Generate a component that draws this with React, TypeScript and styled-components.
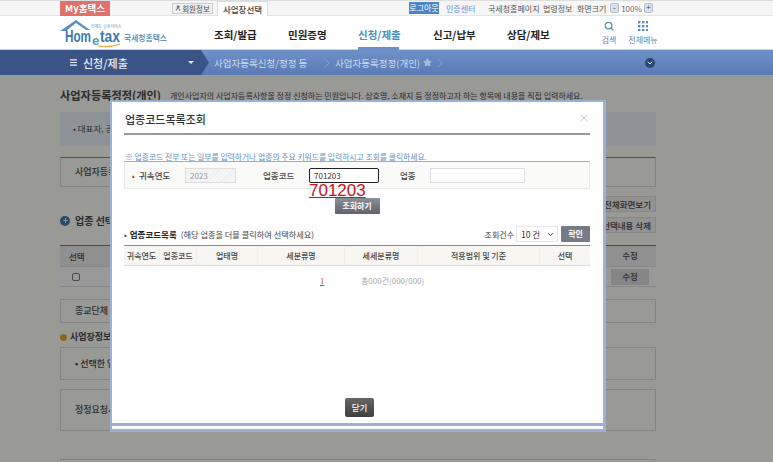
import styled, { createGlobalStyle } from "styled-components";
import { Search, X, Menu, Star, ChevronDown, ChevronRight, User, Plus } from "lucide-react";

const GlobalStyle = createGlobalStyle`
  html, body {
    margin: 0;
    padding: 0;
    width: 773px;
    height: 462px;
    overflow: hidden;
    background: #fff;
    font-family: "Noto Sans CJK KR", "Noto Sans", sans-serif;
  }
  * { box-sizing: border-box; }
`;

const Page = styled.div`
  position: relative;
  width: 773px;
  height: 462px;
  overflow: hidden;
`;

/* top utility bar */
const TopBar = styled.div`
  height: 16px;
  background: #f6f6f6;
  border-top: 1px solid #ddd;
  border-bottom: 1px solid #e4e4e4;
  padding-left: 60px;
  display: flex;
  align-items: center;
  font-size: 8.5px;
  color: #444;
`;

const MyTab = styled.div`
  width: 50px;
  height: 15px;
  background: #e0706a;
  color: #fff;
  font-size: 9.5px;
  font-weight: 700;
  text-align: center;
  line-height: 15px;
`;

const MemberBtn = styled.div`
  margin-left: 62px;
  width: 41px;
  height: 11px;
  border: 1px solid #ccc;
  background: #f2f2f2;
  font-size: 7.5px;
  line-height: 9px;
  display: flex;
  align-items: center;
  justify-content: center;
  gap: 1px;
`;

const PlaceTab = styled.div`
  margin-left: 4px;
  width: 51px;
  height: 15px;
  background: #fff;
  border: 1px solid #ddd;
  border-bottom: none;
  font-size: 8.5px;
  font-weight: 500;
  text-align: center;
  line-height: 14px;
`;

const LogoutBtn = styled.div`
  margin-left: 141px;
  width: 30px;
  height: 12px;
  background: #4a86c5;
  color: #fff;
  line-height: 12px;
  text-align: center;
  font-size: 8px;
`;

const TopLink = styled.span<{ $w: number; $blue?: boolean; $gap: number }>`
  width: ${(p) => p.$w}px;
  margin-left: ${(p) => p.$gap}px;
  color: ${(p) => (p.$blue ? "#5b8fd0" : "#555")};
  font-size: 8px;
  white-space: nowrap;
`;

const Zoomer = styled.div`
  margin-left: 5px;
  width: 43px;
  height: 11px;
  display: flex;
  align-items: center;
  justify-content: space-between;
  background: #fff;
  font-size: 8px;
  color: #666;
`;

const ZoomKey = styled.span`
  width: 9px;
  height: 10px;
  background: #d8e0ec;
  border: 1px solid #b5bfce;
  border-radius: 2px;
  font-size: 7px;
  line-height: 7px;
  text-align: center;
  color: #333;
`;

/* main menu */
const Header = styled.div`
  height: 34px;
  background: #fff;
  padding-left: 60px;
  display: flex;
  align-items: center;
  border-bottom: 1px solid #c9d3e2;
`;

const LogoArt = styled.svg`
  width: 113px;
  height: 32px;
  flex: none;
`;

const MainItem = styled.div<{ $w: number; $gap: number; $on?: boolean }>`
  width: ${(p) => p.$w}px;
  margin-left: ${(p) => p.$gap}px;
  height: 34px;
  line-height: 38px;
  font-size: 10.5px;
  font-weight: 700;
  white-space: nowrap;
  color: ${(p) => (p.$on ? "#4a8fc4" : "#222")};
  border-bottom: ${(p) => (p.$on ? "3px solid #6b8fc4" : "none")};
`;

const HeadIcon = styled.div<{ $gap: number; $w: number }>`
  width: ${(p) => p.$w}px;
  margin-left: ${(p) => p.$gap}px;
  display: flex;
  flex-direction: column;
  align-items: center;
  font-size: 8px;
  color: #5b8ab8;
  line-height: 11px;
  gap: 3px;
  white-space: nowrap;
`;

const Dots = styled.svg`
  width: 10px;
  height: 10px;
`;

/* breadcrumb band */
const Band = styled.div`
  height: 25px;
  display: flex;
  align-items: center;
  background: linear-gradient(#6f90c8, #5a7ab3);
  color: #cfdcf0;
  font-size: 9.5px;
`;

const BandDark = styled.div`
  width: 209px;
  height: 25px;
  padding-left: 69px;
  flex: none;
  display: flex;
  align-items: center;
  color: #e8eef8;
  background: #3a5488;
  clip-path: polygon(0 0, 201px 0, 209px 50%, 201px 100%, 0 100%);
  font-size: 11px;
  font-weight: 500;
`;

const BandTitle = styled.span`
  margin-left: 5px;
  width: 105px;
`;

const Caret = styled.span`
  width: 0;
  height: 0;
  border: 3px solid transparent;
  border-top: 3px solid #e8eef8;
  border-bottom: none;
`;

const Crumb = styled.span<{ $w: number; $gap: number }>`
  width: ${(p) => p.$w}px;
  margin-left: ${(p) => p.$gap}px;
  white-space: nowrap;
`;

const CrumbTip = styled.span<{ $gap: number }>`
  display: flex;
  margin-left: ${(p) => p.$gap}px;
  color: #8fa8d4;
`;

const BandKnob = styled.div`
  margin-left: 197px;
  width: 10px;
  height: 10px;
  border-radius: 50%;
  background: #2f4670;
  color: #dfe7f3;
  display: flex;
  align-items: center;
  justify-content: center;
`;

/* page behind the dialog */
const Content = styled.div`
  position: relative;
  width: 773px;
  height: 387px;
  padding: 12px 117px 0 60px;
  background: #fffffb;
  color: #4a4a4a;
`;

const Dim = styled.div`
  position: absolute;
  inset: 0;
  background: rgba(0, 0, 0, 0.4);
`;

const TitleRow = styled.div`
  display: flex;
  align-items: center;
  height: 16px;
`;

const PageTitle = styled.div`
  width: 110px;
  font-size: 11.2px;
  font-weight: 700;
  white-space: nowrap;
`;

const PageDesc = styled.div`
  font-size: 8px;
  white-space: nowrap;
`;

const Notice = styled.div`
  margin-top: 9px;
  height: 34px;
  padding-left: 13px;
  background: #ecf6fa;
  font-size: 8.5px;
  line-height: 33px;
`;

const BackBox = styled.div<{ $h: number; $mt: number; $strong?: boolean }>`
  height: ${(p) => p.$h}px;
  margin-top: ${(p) => p.$mt}px;
  padding-left: 14px;
  border: 1px solid #ddd;
  border-top: 1px solid ${(p) => (p.$strong ? "#888" : "#ddd")};
  font-size: 9px;
  font-weight: 500;
  line-height: ${(p) => p.$h - 2}px;
  white-space: nowrap;
`;

const ToolRow = styled.div`
  position: relative;
  height: 58px;
  display: flex;
  flex-direction: column;
  align-items: flex-end;
  gap: 5px;
  padding-top: 9px;
`;

const GhostBtn = styled.div<{ $w: number }>`
  width: ${(p) => p.$w}px;
  height: 16px;
  padding-right: 4px;
  text-align: right;
  font-size: 8.5px;
  font-weight: 500;
  line-height: 15px;
  background: #f3f3f3;
  border: 1px solid #e2e2e2;
`;

const SectionHead = styled.div`
  position: absolute;
  left: 0;
  top: 26px;
  display: flex;
  align-items: center;
  gap: 5px;
  font-size: 10px;
  font-weight: 700;
`;

const Bullet = styled.span<{ $c: string; $s: number }>`
  width: ${(p) => p.$s}px;
  height: ${(p) => p.$s}px;
  border-radius: 50%;
  background: ${(p) => p.$c};
  color: #fff;
  display: flex;
  align-items: center;
  justify-content: center;
`;

const BackTable = styled.div`
  border-top: 1px solid #777;
  font-size: 8.5px;
  font-weight: 500;
`;

const BackRow = styled.div<{ $head?: boolean }>`
  height: ${(p) => (p.$head ? 21 : 20)}px;
  display: flex;
  align-items: center;
  justify-content: space-between;
  padding: 0 7px 0 9px;
  background: ${(p) => (p.$head ? "#f1f1f1" : "#fff")};
  border-bottom: 1px solid #e3e3e3;
`;

const BackCheck = styled.span`
  margin-left: 3px;
  width: 8px;
  height: 8px;
  border: 1px solid #777;
  border-radius: 2px;
`;

const BackEdit = styled.span<{ $fill?: boolean }>`
  width: 38px;
  height: 16px;
  line-height: 15px;
  text-align: center;
  border-radius: 1px;
  background: ${(p) => (p.$fill ? "#dedede" : "transparent")};
`;

const SubHead = styled.div`
  margin-top: 9px;
  height: 10px;
  display: flex;
  align-items: center;
  gap: 3px;
  font-size: 9px;
  font-weight: 700;
  line-height: 10px;
`;

const SideBox = styled.div`
  position: absolute;
  left: 546px;
  top: 317px;
  width: 46px;
  height: 36px;
  border: 1px solid #ddd;
`;

const FootBox = styled.div`
  position: absolute;
  left: 60px;
  top: 384px;
  width: 596px;
  height: 10px;
  border: 1px solid #ddd;
  border-bottom: none;
`;

/* dialog */
const Dialog = styled.div`
  position: absolute;
  left: 110px;
  top: 100px;
  width: 496px;
  height: 332px;
  border: solid #9cafd4;
  border-width: 2px 3px 3px 2px;
  background: #9cafd4;
  display: flex;
  flex-direction: column;
`;

const DialogBody = styled.div`
  position: relative;
  height: 321px;
  background: #fff;
  padding: 0 13px 0 12px;
`;

const DialogEdge = styled.div`
  margin-top: 3px;
  height: 3px;
  background: #fff;
`;

const DialogHead = styled.div`
  height: 33px;
  display: flex;
  align-items: flex-end;
  justify-content: space-between;
  padding: 0 0 6px 1px;
  border-bottom: 2px solid #999;
  font-size: 11px;
  font-weight: 500;
  color: #333;
`;

const CloseMark = styled.span`
  color: #999;
  display: flex;
  margin-bottom: 3px;
`;

const HintLink = styled.div`
  margin-top: 16px;
  font-size: 7.8px;
  line-height: 11px;
  color: #5f93bf;
  text-decoration: underline;
  white-space: nowrap;
  padding-left: 1px;
`;

const FormBox = styled.div`
  position: relative;
  height: 28px;
  margin-top: -1px;
  display: flex;
  align-items: center;
  background: #fafaf8;
  border: 1px solid #e8e8e6;
  border-top: 1px solid #aaa;
  font-size: 8.5px;
  color: #444;
`;

const Req = styled.span`
  margin-left: 7px;
  width: 7px;
  color: #c22;
  font-size: 8px;
`;

const FieldLabel = styled.span<{ $w: number; $ml?: number }>`
  width: ${(p) => p.$w}px;
  margin-left: ${(p) => p.$ml ?? 0}px;
  white-space: nowrap;
  font-weight: 500;
`;

const Field = styled.div<{ $w: number; $mode?: "locked" | "active" }>`
  width: ${(p) => p.$w}px;
  height: 15px;
  padding-left: 4px;
  font-size: 8px;
  line-height: 13px;
  color: ${(p) => (p.$mode === "locked" ? "#999" : "#333")};
  background: ${(p) =>
    p.$mode === "locked"
      ? "repeating-linear-gradient(135deg, #eee 0 1px, #f6f6f6 1px 3px)"
      : "#fff"};
  border: 1px solid ${(p) => (p.$mode === "active" ? "#222" : "#ddd")};
  border-radius: ${(p) => (p.$mode === "active" ? 2 : 0)}px;
`;

const RedNote = styled.div`
  position: absolute;
  left: 184px;
  top: 20px;
  font-family: "Liberation Sans", sans-serif;
  font-size: 17px;
  line-height: 18px;
  color: #c8141c;
  text-decoration: underline;
`;

const CenterRow = styled.div<{ $mt: number }>`
  display: flex;
  justify-content: center;
  margin-top: ${(p) => p.$mt}px;
`;

const SearchBtn = styled.div`
  width: 45px;
  height: 16px;
  border-radius: 1px;
  background: linear-gradient(#8b8f97, #5f636b);
  color: #fff;
  font-size: 8px;
  font-weight: 700;
  line-height: 15px;
  text-align: center;
`;

const ListHead = styled.div`
  margin-top: 12px;
  height: 16px;
  display: flex;
  align-items: center;
  font-size: 8.2px;
  color: #444;
  white-space: nowrap;
`;

const ListTitle = styled.strong`
  margin: 0 4px 0 3px;
  font-size: 8.5px;
  color: #222;
`;

const CountLabel = styled.span`
  margin-left: auto;
  margin-right: 2px;
  font-size: 8px;
`;

const PageSize = styled.div`
  width: 42px;
  height: 16px;
  padding: 0 2px 0 4px;
  display: flex;
  align-items: center;
  justify-content: space-between;
  font-size: 8.5px;
  background: #fff;
  border: 1px solid #e8e8e8;
  color: #333;
`;

const ConfirmBtn = styled.div`
  margin-left: 3px;
  width: 29px;
  height: 16px;
  border-radius: 1px;
  background: #777b85;
  color: #fff;
  font-size: 8px;
  font-weight: 700;
  line-height: 15px;
  text-align: center;
`;

const GridHead = styled.div`
  margin-top: 3px;
  height: 21px;
  display: grid;
  grid-template-columns: 36px 37px 61px 87px 73px 122px 50px;
  background: #f7f6f3;
  border-top: 1px solid #888;
  border-bottom: 1px solid #ddd;
`;

const GridCell = styled.div`
  font-size: 8px;
  font-weight: 500;
  line-height: 19px;
  text-align: center;
  color: #444;
  white-space: nowrap;
  border-right: 1px solid #f0efec;
  &:last-child {
    border-right: none;
  }
`;

const Pager = styled.div`
  margin-top: 9px;
  height: 12px;
  display: flex;
  font-size: 8.5px;
  line-height: 12px;
`;

const PagerNum = styled.span`
  margin-left: 196px;
  width: 41px;
  font-family: "Liberation Serif", serif;
  color: #c0403a;
  text-decoration: underline;
`;

const PagerTotal = styled.span`
  color: #aaa;
  font-size: 8px;
  white-space: nowrap;
`;

const CloseBtn = styled.div`
  position: absolute;
  left: 233px;
  bottom: 6px;
  width: 29px;
  height: 19px;
  border-radius: 2px;
  background: linear-gradient(#666, #3f3f3f);
  color: #fff;
  font-size: 8.5px;
  font-weight: 500;
  line-height: 18px;
  text-align: center;
`;

const columns = [
  "귀속연도",
  "업종코드",
  "업태명",
  "세분류명",
  "세세분류명",
  "적용범위 및 기준",
  "선택",
];

function Logo() {
  return (
    <LogoArt viewBox="0 0 113 32">
      <path d="M0 14 L16 3 L30 13 L26 13 L16 6 L6 14 Z" fill="#5a8fc0" />
      <text
        x="5"
        y="25"
        fontFamily="Liberation Sans"
        fontWeight="700"
        fontSize="16"
        fill="#3d78b0"
        textLength="26"
        lengthAdjust="spacingAndGlyphs"
      >
        Hom
      </text>
      <text
        x="32"
        y="28"
        fontFamily="Liberation Sans"
        fontWeight="700"
        fontSize="13"
        fill="#5aa0a8"
        textLength="7.5"
        lengthAdjust="spacingAndGlyphs"
      >
        e
      </text>
      <text
        x="40"
        y="25"
        fontFamily="Liberation Sans"
        fontWeight="700"
        fontSize="16"
        fill="#3d78b0"
        textLength="20"
        lengthAdjust="spacingAndGlyphs"
      >
        tax
      </text>
      <path d="M38 29 Q50 31 60 27" stroke="#e2a63b" strokeWidth="1.2" fill="none" />
      <text x="64" y="24" fontFamily="Noto Sans CJK KR" fontWeight="500" fontSize="7.8" fill="#4a86b8">
        국세청홈택스
      </text>
      <text x="31" y="11" fontFamily="Noto Sans CJK KR" fontSize="4" fill="#6b93b8">
        언제든 실생서비스
      </text>
    </LogoArt>
  );
}

function GridDots() {
  const spots = [0, 4, 8];
  return (
    <Dots viewBox="0 0 10 10">
      {spots.map((y) =>
        spots.map((x) => (
          <rect key={`${x}-${y}`} x={x} y={y} width="2.4" height="2.4" fill="#5b8ab8" />
        ))
      )}
    </Dots>
  );
}

export default function App() {
  return (
    <Page>
      <GlobalStyle />
      <TopBar>
        <MyTab>My홈택스</MyTab>
        <MemberBtn>
          <User size={6} strokeWidth={3} />
          회원정보
        </MemberBtn>
        <PlaceTab>사업장선택</PlaceTab>
        <LogoutBtn>로그아웃</LogoutBtn>
        <TopLink $w={30} $gap={7} $blue>
          인증센터
        </TopLink>
        <TopLink $w={48} $gap={12}>
          국세청홈페이지
        </TopLink>
        <TopLink $w={27} $gap={7}>
          법령정보
        </TopLink>
        <TopLink $w={28} $gap={7}>
          화면크기
        </TopLink>
        <Zoomer>
          <ZoomKey>-</ZoomKey>
          100%
          <ZoomKey>+</ZoomKey>
        </Zoomer>
      </TopBar>

      <Header>
        <Logo />
        <MainItem $w={41} $gap={41}>
          조회/발급
        </MainItem>
        <MainItem $w={38} $gap={33}>
          민원증명
        </MainItem>
        <MainItem $w={41} $gap={32} $on>
          신청/제출
        </MainItem>
        <MainItem $w={41} $gap={34}>
          신고/납부
        </MainItem>
        <MainItem $w={41} $gap={33}>
          상담/제보
        </MainItem>
        <HeadIcon $w={16} $gap={53}>
          <Search size={10} strokeWidth={3} />
          검색
        </HeadIcon>
        <HeadIcon $w={30} $gap={11}>
          <GridDots />
          전체메뉴
        </HeadIcon>
      </Header>

      <Band>
        <BandDark>
          <Menu size={9} strokeWidth={3} />
          <BandTitle>신청/제출</BandTitle>
          <Caret />
        </BandDark>
        <Crumb $w={97} $gap={5}>
          사업자등록신청/정정 등
        </Crumb>
        <CrumbTip $gap={8}>
          <ChevronRight size={16} strokeWidth={1} />
        </CrumbTip>
        <Crumb $w={88} $gap={0}>
          사업자등록정정(개인)
        </Crumb>
        <Star size={9} fill="#a9bddd" color="#a9bddd" />
        <CrumbTip $gap={0}>
          <ChevronRight size={16} strokeWidth={1} />
        </CrumbTip>
        <BandKnob>
          <ChevronDown size={8} strokeWidth={3} />
        </BandKnob>
      </Band>

      <Content>
        <TitleRow>
          <PageTitle>사업자등록정정(개인)</PageTitle>
          <PageDesc>
            개인사업자의 사업자등록사항을 정정 신청하는 민원입니다. 상호명, 소재지 등
            정정하고자 하는 항목에 내용을 직접 입력하세요.
          </PageDesc>
        </TitleRow>
        <Notice>• 대표자, 공</Notice>
        <BackBox $h={30} $mt={11} $strong>
          사업자등록
        </BackBox>
        <ToolRow>
          <GhostBtn $w={62}>전체화면보기</GhostBtn>
          <GhostBtn $w={66}>선택내용 삭제</GhostBtn>
          <SectionHead>
            <Bullet $c="#3f79bd" $s={10}>
              <Plus size={7} strokeWidth={3} />
            </Bullet>
            업종 선택
          </SectionHead>
        </ToolRow>
        <BackTable>
          <BackRow $head>
            선택
            <BackEdit>수정</BackEdit>
          </BackRow>
          <BackRow>
            <BackCheck />
            <BackEdit $fill>수정</BackEdit>
          </BackRow>
        </BackTable>
        <BackBox $h={24} $mt={12}>
          종교단체 여부
        </BackBox>
        <SubHead>
          <Bullet $c="#e9a23b" $s={7} />
          사업장정보
        </SubHead>
        <BackBox $h={33} $mt={5}>
          • 선택한 업종
        </BackBox>
        <BackBox $h={42} $mt={9}>
          정정요청서
        </BackBox>
        <SideBox />
        <FootBox />
        <Dim />
      </Content>

      <Dialog>
        <DialogBody>
          <DialogHead>
            업종코드목록조회
            <CloseMark>
              <X size={12} strokeWidth={1} />
            </CloseMark>
          </DialogHead>
          <HintLink>
            ※ 업종코드 전부 또는 일부를 입력하거나 업종의 주요 키워드를 입력하시고 조회를
            클릭하세요.
          </HintLink>
          <FormBox>
            <Req>•</Req>
            <FieldLabel $w={46}>귀속연도</FieldLabel>
            <Field $w={51} $mode="locked">
              2023
            </Field>
            <FieldLabel $w={46} $ml={27}>
              업종코드
            </FieldLabel>
            <Field $w={70} $mode="active">
              701203
            </Field>
            <FieldLabel $w={30} $ml={21}>
              업종
            </FieldLabel>
            <Field $w={95} />
            <RedNote>701203</RedNote>
          </FormBox>
          <CenterRow $mt={9}>
            <SearchBtn>조회하기</SearchBtn>
          </CenterRow>
          <ListHead>
            •<ListTitle>업종코드목록</ListTitle>
            (해당 업종을 더블 클릭하여 선택하세요)
            <CountLabel>조회건수</CountLabel>
            <PageSize>
              10 건
              <ChevronDown size={9} strokeWidth={2.5} />
            </PageSize>
            <ConfirmBtn>확인</ConfirmBtn>
          </ListHead>
          <GridHead>
            {columns.map((c) => (
              <GridCell key={c}>{c}</GridCell>
            ))}
          </GridHead>
          <Pager>
            <PagerNum>1</PagerNum>
            <PagerTotal>총000건(000/000)</PagerTotal>
          </Pager>
          <CloseBtn>닫기</CloseBtn>
        </DialogBody>
        <DialogEdge />
      </Dialog>
    </Page>
  );
}
